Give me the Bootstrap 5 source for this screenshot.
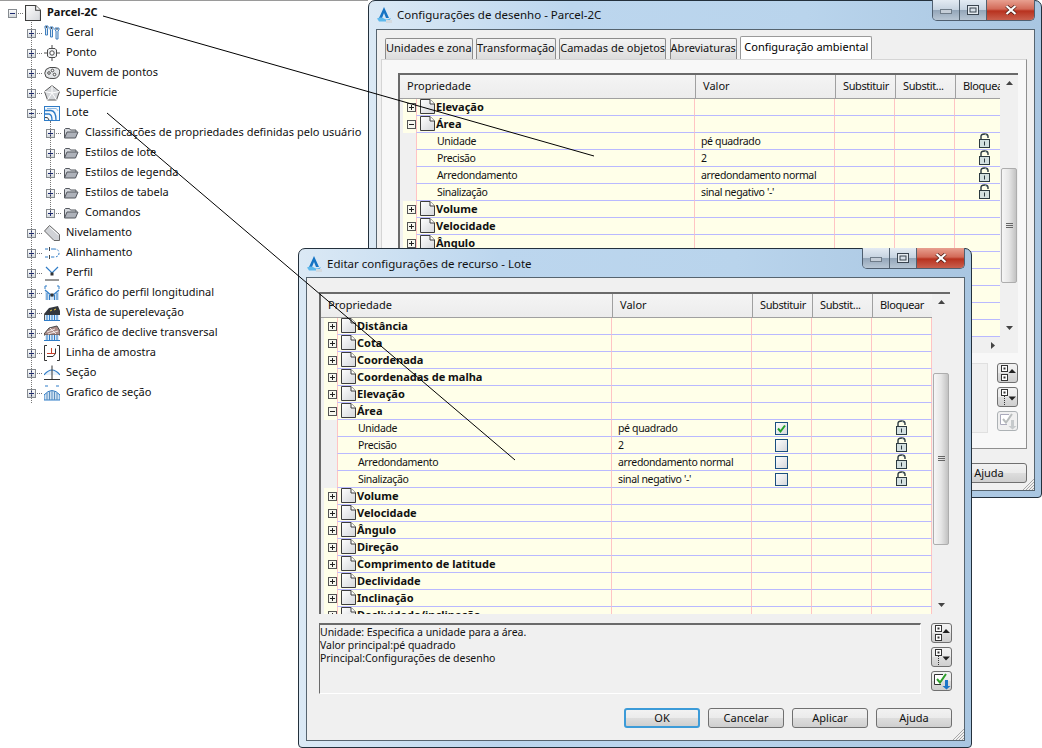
<!DOCTYPE html>
<html lang="pt">
<head>
<meta charset="utf-8">
<title>Configurações</title>
<link href="https://cdn.jsdelivr.net/npm/bootstrap@5.3.0/dist/css/bootstrap.min.css" rel="stylesheet">
<style>
html,body{margin:0;background:#fff}
body{font:11px/14px "Noto Sans",sans-serif;color:#111}
.deskarea{position:relative;width:1042px;height:748px;overflow:hidden;background:#fff}
.treepane{position:relative;border-top:1px solid #9a9a9a;padding-top:2px;width:368px}
.vdots{position:absolute;border-left:1px dotted #777;width:0}
.vd-a{left:31px;top:21px;height:381px}
.vd-b{left:50px;top:120px;height:92px}
.trow{height:20px;display:flex;align-items:center;white-space:nowrap}
.lv0{padding-left:8px}.lv1{padding-left:27px}.lv2{padding-left:46px}
.stub{width:5px;height:0;border-top:1px dotted #777;margin:0 2px 0 1px;flex:none}
.xb{width:9px;height:9px;flex:none;display:block}
.ico{width:16px;height:16px;flex:none;display:block}
.tlabel{margin-left:6px;margin-bottom:2px}
.lv0 .tlabel{font-weight:700}
.winbox{position:absolute;width:674px;display:flex;flex-direction:column;border:1px solid #23303c;border-radius:7px 7px 4px 4px;
 background:linear-gradient(90deg,#dbe9f5,#bcd6ee 30%,#b9d4ec 65%,#a9c6e1);padding:0 6px 6px 7px}
.win-back{left:368px;top:0;height:498px}
.win-front{left:298px;top:248px;height:500px}
.ttlbar{height:28px;display:flex;align-items:center;flex:none;font-size:11.5px;position:relative}
.win-front .ttlbar{padding-top:1px}
.ttlbar .apico{width:16px;height:16px;margin-right:5px;flex:none}
.winbtns{position:absolute;right:0;top:-1px;height:21px;display:flex;border:1px solid #4f5f70;border-top:0;border-radius:0 0 5px 5px;overflow:hidden}
.wb{display:flex;align-items:center;justify-content:center;width:27px;background:linear-gradient(#e3ebf3,#c6d3e0 48%,#94a6b9 52%,#b8c6d4);border-right:1px solid #52616f}
.wb-x{width:47px;border-right:0;background:linear-gradient(#e8a090,#d26a58 45%,#b8321f 55%,#c9604e)}
.clientbox{flex:1;min-height:0;background:#f0f0f0;border:1px solid #56646f;position:relative;display:flex;flex-direction:column}
.grip{position:absolute;right:0;bottom:0;width:12px;height:12px}
.f-body{padding:14px 12px 12px 12px;height:100%;display:flex;flex-direction:column}
.pgrid{display:flex;border-top:2px solid #6a6a6a;border-left:2px solid #6a6a6a;overflow:hidden;flex:none;background:#f0f0f0}
.pg-main{flex:1;min-width:0;overflow:hidden}
.pg-head{display:flex;height:24px;background:linear-gradient(#f4f4f4,#ececec);border-bottom:1px solid #a0a0a0}
.hc{border-right:1px solid #a0a0a0;padding-left:7px;line-height:22px;white-space:nowrap;overflow:hidden;flex:none}
.c1{width:292px}.c2{width:140px}.c3{width:60px;letter-spacing:-.4px}
.pg-row{display:flex;height:17px;white-space:nowrap}
.gut{width:3px;flex:none;background:#f0f0f0}
.ex{width:13px;flex:none;background:#ffffe9;display:flex;align-items:center;padding-left:4px;border-bottom:1px solid #ffffe9}
.ex-empty{background:#f0f0f0;border-bottom:0}
.cell{background:#ffffe9;border-right:1px solid #ffc4c4;border-bottom:1px solid #b9b9ff;flex:none;line-height:17px;overflow:visible;position:relative;font-size:10.5px;letter-spacing:-.35px}
.cl{width:275px;border-left:1px solid #ffc4c4}
.cv{width:140px;padding-left:6px}
.cs{width:60px;display:flex;align-items:center;justify-content:center}
.docic{position:absolute;left:3px;top:0;width:15px;height:15px;display:block}
.gname{font-weight:700;padding-left:19px;display:block;font-size:11px;letter-spacing:0;line-height:15px}
.cname{padding-left:20px;display:block}
.ckb{width:13px;height:13px;display:block}
.lck{width:13px;height:15px;display:block;margin-bottom:2px}
.vsb{width:18px;flex:none;background:#f0f0f0;display:flex;flex-direction:column;align-items:center}
.sbb{height:16px;flex:none;width:100%;display:flex;align-items:center;justify-content:center}
.sbb-end{height:18px}
.thumb{width:16px;flex:none;border:1px solid #adadad;border-radius:2px;background:linear-gradient(90deg,#f6f6f6,#e6e6e6 50%,#c2c2c2);display:flex;align-items:center;justify-content:center}
.sbgap{flex:1}
.fr-grid{width:631px;height:322px}
.fr-gap{height:63px;flex:none}
.fr-thumb{height:172px}
.descline{display:flex;margin-top:9px;gap:10px;flex:none}
.descbox{border:1px solid #fff;border-top:2px solid #6a6a6a;border-left:1px solid #6a6a6a;height:71px;width:602px;line-height:13px;font-size:10.5px;letter-spacing:-.05px;padding-top:1px;flex:none}
.sidebtns{display:flex;flex-direction:column;gap:4px;width:21px}
.sb-tool{width:21px;height:20px;border:1px solid #707070;border-radius:3px;background:linear-gradient(#f2f2f2,#ebebeb 48%,#ddd 52%,#cfcfcf);padding:0;display:block}
.sb-tool svg{display:block;width:19px;height:18px}
.sb-off{border-color:#adb2b5;background:#f0f0f0}
.actbar{margin-top:14px;display:flex;justify-content:flex-end;gap:8px;flex:none}
.actbtn{width:76px;height:20px;padding:0;font-size:11px;line-height:16px;color:#111;border:1px solid #707070;border-radius:3px;background:linear-gradient(#f2f2f2,#ebebeb 48%,#ddd 52%,#cfcfcf)}
.actbtn-main{border:2px solid #3c9bd8}
.tabstrip{margin:7px 0 0 4px;padding:0 0 0 4px;height:22px;border:0;gap:3.5px;flex-wrap:nowrap;flex:none;position:relative;z-index:1;align-items:flex-end}
.tabstrip .nav-link{height:21px;padding:0;font-size:11px;line-height:18px;color:#111;border:1px solid #8c8c8c;border-bottom:0;border-radius:2px 2px 0 0;background:linear-gradient(#f4f4f4,#dcdcdc);margin:0;white-space:nowrap}
.tabstrip .nav-link.active{height:23px;background:#fff;border-color:#9a9a9a;padding:0 3px;line-height:19px}
.tabpane{margin-left:4px;margin-right:7px;height:390px;flex:none;background:#f8f8f8;border:1px solid #8f8f8f;border-left-color:#d5d5d5;border-top-color:#d5d5d5;padding:13px 7px 0 16px}
.bk-grid{width:620px;height:264px}
.bk-grid .c1{width:296px}
.bk-grid .cl{width:279px}
.bk-gap{height:77px;flex:none}
.bk-thumb{height:115px}
.bk-hs{display:flex;width:620px;height:16px;background:#f0f0f0;justify-content:flex-end;align-items:center;padding-right:23px;border-left:2px solid #6a6a6a}
.bk-foot{display:flex;justify-content:flex-end;margin:14px 7px 0 0}
.bk-desc{display:flex;gap:9px;margin-top:10px}
.bk-descbox{width:590px;height:70px;background:#f0f0f0;border:1px solid #e0e0e0}
.leader{position:absolute;left:0;top:0;width:1042px;height:748px;pointer-events:none}
</style>
</head>
<body>
<svg width="0" height="0" class="position-absolute">
<defs>
<linearGradient id="gb" x1="0" y1="0" x2="0" y2="1"><stop offset="0" stop-color="#fff"/><stop offset="1" stop-color="#cfd4d8"/></linearGradient>
<linearGradient id="gd" x1="0" y1="0" x2="1" y2="1"><stop offset="0" stop-color="#fff"/><stop offset="1" stop-color="#d4d6da"/></linearGradient>
<symbol id="tp" viewBox="0 0 9 9"><rect x=".5" y=".5" width="8" height="8" fill="url(#gb)" stroke="#868b90"/><path d="M2 4.500h5M4.500 2v5" stroke="#1c2a70"/></symbol>
<symbol id="tm" viewBox="0 0 9 9"><rect x=".5" y=".5" width="8" height="8" fill="url(#gb)" stroke="#868b90"/><path d="M2 4.500h5" stroke="#1c2a70"/></symbol>
<symbol id="gp" viewBox="0 0 9 9"><rect x=".5" y=".5" width="8" height="8" fill="#f7f7ef" stroke="#555"/><path d="M2 4.500h5M4.500 2v5" stroke="#222"/></symbol>
<symbol id="gm" viewBox="0 0 9 9"><rect x=".5" y=".5" width="8" height="8" fill="#f7f7ef" stroke="#555"/><path d="M2 4.500h5" stroke="#222"/></symbol>
<symbol id="doc" viewBox="0 0 15 15"><path d="M.5 .5H10L14.500 5V14.500H.5Z" fill="url(#gd)" stroke="#3d3d3d"/><path d="M10 .5V5H14.500" fill="#fff" stroke="#3d3d3d"/></symbol>
<symbol id="folder" viewBox="0 0 16 16"><path d="M1.500 13V4.500l1-1h4l1 1.500h5.500v2" fill="#d4d7dc" stroke="#55585f"/><path d="M1.500 13L4 7h11l-2.500 6Z" fill="#aeb2ba" stroke="#55585f"/></symbol>
<symbol id="i-geral" viewBox="0 0 16 16"><g fill="#dfe9f2" stroke="#3f7fbf"><path d="M1 1h3v2l-.5 1v6H1.500V4L1 3Z"/><path d="M6 2h3v2l-.5 1v7h-2V5L6 4Z"/><path d="M11 3h4v2l-1 1v8h-2V6l-1-1Z"/></g><path d="M2.500 1v2M7.500 2v2M13 3v2" stroke="#44494f"/></symbol>
<symbol id="i-ponto" viewBox="0 0 16 16"><path d="M8 0v4M8 12v4M0 8h4M12 8h4" stroke="#4a4a4a"/><path d="M5 3.500h6L12.500 5v6L11 12.500H5L3.500 11V5Z" fill="#eef0f2" stroke="#4a4a4a"/><circle cx="8" cy="8" r="2.200" fill="#fff" stroke="#4a4a4a"/></symbol>
<symbol id="i-nuvem" viewBox="0 0 16 16"><path d="M2 4.500Q5 1.500 11 2.500T15.500 8Q15 13 10 13.500T2 12Q-.5 8 2 4.500Z" fill="#e4e6e8" stroke="#4a4a4a"/><circle cx="5" cy="8" r="1.300" fill="#fff" stroke="#4a4a4a"/><circle cx="8.500" cy="5.500" r="1.300" fill="#fff" stroke="#4a4a4a"/><circle cx="10.500" cy="9.500" r="1.300" fill="#fff" stroke="#4a4a4a"/></symbol>
<symbol id="i-sup" viewBox="0 0 16 16"><path d="M8 .5L15.500 6.500 12.500 15H3.500L.5 6.500Z" fill="#d5d7da" stroke="#5a5a5a"/><path d="M8 .5V8L.5 6.500M8 8l7.500-1.500M8 8l-4.500 7M8 8l4.500 7" fill="none" stroke="#fff"/></symbol>
<symbol id="i-lote" viewBox="0 0 16 16"><rect x=".5" y="1.500" width="15" height="14" fill="#f5f9fd" stroke="#2f7cc7"/><path d="M.5 5.500H7Q12 6 12 15M.5 9H5Q8 9.500 8 15" fill="none" stroke="#2f7cc7" stroke-width="1.300"/><path d="M1 12.500Q4 11.500 5 15" fill="none" stroke="#3f3f3f"/><path d="M3 3.500h9Q13.500 4 14 6" fill="none" stroke="#8fb8e0"/></symbol>
<symbol id="i-niv" viewBox="0 0 16 16"><path d="M.5 6L5.500 .5 15.500 9.500V15.500H10Z" fill="#d0d2d6" stroke="#666"/><path d="M5.500 2L14.500 10" stroke="#fff"/></symbol>
<symbol id="i-ali" viewBox="0 0 16 16"><g fill="none" stroke="#2f7cc7"><path d="M1 4h3M7 4h3M1 12h3M7 12h3"/><path d="M10 4q5 0 5 4t-5 4" stroke-dasharray="2 1.500"/></g><path d="M5.500 2v4M5.500 10v4" stroke="#444"/></symbol>
<symbol id="i-perf" viewBox="0 0 16 16"><path d="M2 2l6 6 6-6" fill="none" stroke="#2f7cc7" stroke-width="1.200"/><rect x="6.500" y="7.500" width="3" height="3" fill="#333"/><path d="M1 15h14" stroke="#333"/></symbol>
<symbol id="i-gperf" viewBox="0 0 16 16"><path d="M1 1h2M13 1h2M1 1v3M15 1v3" stroke="#2f7cc7"/><path d="M1 5l7 6 7-6V15H1Z" fill="#cfe1f2"/><path d="M1 5l7 6 7-6" fill="none" stroke="#2f7cc7" stroke-width="1.200"/><path d="M3 8v7M5.500 10v5M10.500 10v5M13 8v7" stroke="#2f7cc7"/><rect x="6.500" y="8.500" width="3" height="3" fill="#333"/></symbol>
<symbol id="i-vsup" viewBox="0 0 16 16"><path d="M0 9L5 3 14 1 16 6V10H0Z" fill="#33373d"/><path d="M6 6l2-1M10 5l2-1" stroke="#e8c640"/><path d="M1 10h14v5H1Z" fill="#dbe9f6"/><path d="M3 10v5M5.500 10v5M8 10v5M10.500 10v5M13 10v5" stroke="#2f7cc7"/><path d="M0 15.500h16" stroke="#2f7cc7"/><path d="M.5 9v6" stroke="#555"/></symbol>
<symbol id="i-gdec" viewBox="0 0 16 16"><path d="M0 9L5 3 13 1 16 6V10H0Z" fill="#a98a86" stroke="#4a4a4a"/><path d="M3 7l8-3M4 9l10-3M6 3l6 6" stroke="#f0e6e4"/><path d="M1 10h14v5H1Z" fill="#dbe9f6"/><path d="M3 10v5M5.500 10v5M8 10v5M10.500 10v5M13 10v5" stroke="#2f7cc7"/><path d="M0 15.500h16" stroke="#2f7cc7"/></symbol>
<symbol id="i-linha" viewBox="0 0 16 16"><path d="M3 .5H.5v15H3M13 .5h2.500v15H13" fill="none" stroke="#333"/><path d="M3 8.500h8.500M7.500 3v5.500" fill="none" stroke="#c8402a"/><path d="M11.500 3.500V8.500L9 11.500H3" fill="none" stroke="#333"/></symbol>
<symbol id="i-sec" viewBox="0 0 16 16"><path d="M0 10Q8 0 16 10" fill="#e8f1f9" stroke="#2f7cc7" stroke-width="1.200"/><path d="M8 .5V14.500" stroke="#333"/><path d="M0 14.500h16" stroke="#333"/></symbol>
<symbol id="i-gsec" viewBox="0 0 16 16"><path d="M1 1h3M12 1h3" stroke="#2f7cc7"/><path d="M0 10Q8 1 16 10V15H0Z" fill="#cfe1f2" stroke="#2f7cc7"/><path d="M3 8v7M5.500 6v9M8 5v10M10.500 6v9M13 8v7" stroke="#5c8fbf"/></symbol>
<symbol id="apx" viewBox="0 0 16 16"><path d="M8 0L13 11H10L8 6 6 11H3Z" fill="#1574c4"/><path d="M1 11.500Q5 9.500 8 11.500T15 11L13 14.500H3Z" fill="#5cb8ec"/><rect x="10" y="13" width="6" height="3" fill="#d4dadf"/></symbol>
<symbol id="lockic" viewBox="0 0 13 15"><path d="M3 7V3.500Q3 1 6.500 1T10 3.500V5" fill="none" stroke="#2c3a40" stroke-width="1.400"/><path d="M7 1.500Q8.500 1.500 9 3" fill="none" stroke="#9aa"/><rect x="1.500" y="6.500" width="10" height="8" fill="#d3e0e0" stroke="#2c3a40"/><path d="M6.500 8.500v4" stroke="#2c3a40"/></symbol>
<symbol id="ckoff" viewBox="0 0 13 13"><rect x=".5" y=".5" width="12" height="12" fill="url(#gd)" stroke="#1b4f80"/></symbol>
<symbol id="ckon" viewBox="0 0 13 13"><rect x=".5" y=".5" width="12" height="12" fill="url(#gd)" stroke="#1b4f80"/><path d="M3 6.500L5.500 9.500 10 3.500" fill="none" stroke="#21a02a" stroke-width="2"/></symbol>
<symbol id="arU" viewBox="0 0 7 4"><path d="M3.500 0L7 4H0Z" fill="#444"/></symbol>
<symbol id="arD" viewBox="0 0 7 4"><path d="M3.500 4L7 0H0Z" fill="#444"/></symbol>
<symbol id="arR" viewBox="0 0 4 7"><path d="M4 3.500L0 7V0Z" fill="#444"/></symbol>
<symbol id="grips" viewBox="0 0 7 6"><path d="M0 .5h7M0 2.500h7M0 4.500h7" stroke="#666"/></symbol>
<symbol id="t-exp" viewBox="0 0 19 18"><rect x="3.500" y="1.500" width="6" height="6" fill="#fff" stroke="#333"/><rect x="5.500" y="3.500" width="2" height="2" fill="#333"/><rect x="3.500" y="10.500" width="6" height="6" fill="#fff" stroke="#333"/><rect x="5.500" y="12.500" width="2" height="2" fill="#333"/><path d="M14 5L18 9H10.500Z" fill="#222"/></symbol>
<symbol id="t-col" viewBox="0 0 19 18"><rect x="3.500" y="1.500" width="6" height="6" fill="#fff" stroke="#333"/><rect x="5.500" y="3.500" width="2" height="2" fill="#333"/><path d="M6.500 8v10" stroke="#333" stroke-dasharray="1 1"/><path d="M14 12.500L18 8.500H10.500Z" fill="#222"/></symbol>
<symbol id="t-chk" viewBox="0 0 19 18"><path d="M11 2.500H2.500V12.500H9" fill="#fff" stroke="#333"/><path d="M5 7l3 3.500L14 2" fill="none" stroke="#2e9e2a" stroke-width="2"/><path d="M13 8v6h-2.500l4 3.500 4-3.500H16V8Z" fill="#1d76c8"/></symbol>
<symbol id="t-chk-off" viewBox="0 0 19 18"><path d="M11 2.500H2.500V12.500H9" fill="#fff" stroke="#aab"/><path d="M5 7l3 3.500L14 2" fill="none" stroke="#b8bcbc" stroke-width="2"/><path d="M13 8v6h-2.500l4 3.500 4-3.500H16V8Z" fill="#c6cacc"/></symbol>
<symbol id="gripic" viewBox="0 0 12 12"><path d="M12 1L1 12M12 4L4 12M12 7L7 12M12 10L10 12" stroke="#a8a8a8"/></symbol>
<symbol id="w-min" viewBox="0 0 12 8"><rect x=".5" y="3.500" width="11" height="4" fill="#c5ced8" stroke="#6f7c89"/></symbol>
<symbol id="w-max" viewBox="0 0 12 10"><rect x=".5" y=".5" width="11" height="9" fill="#e4eaf0" stroke="#39444f"/><rect x="3" y="3" width="6" height="4" fill="#d7dfe8" stroke="#39444f"/></symbol>
<symbol id="w-x" viewBox="0 0 12 10"><path d="M1.500 1L10.500 9M10.500 1L1.500 9" stroke="#4c1c14" stroke-width="3.600"/><path d="M1.500 1L10.500 9M10.500 1L1.500 9" stroke="#fff" stroke-width="2.200"/></symbol>
</defs>
</svg>

<div class="deskarea">
 <div class="treepane">
  <span class="vdots vd-a"></span><span class="vdots vd-b"></span>
  <div class="trow lv0"><svg class="xb"><use href="#tm"/></svg><span class="stub"></span><svg class="ico"><use href="#doc"/></svg><span class="tlabel">Parcel-2C</span></div>
  <div class="trow lv1"><svg class="xb"><use href="#tp"/></svg><span class="stub"></span><svg class="ico"><use href="#i-geral"/></svg><span class="tlabel">Geral</span></div>
  <div class="trow lv1"><svg class="xb"><use href="#tp"/></svg><span class="stub"></span><svg class="ico"><use href="#i-ponto"/></svg><span class="tlabel">Ponto</span></div>
  <div class="trow lv1"><svg class="xb"><use href="#tp"/></svg><span class="stub"></span><svg class="ico"><use href="#i-nuvem"/></svg><span class="tlabel">Nuvem de pontos</span></div>
  <div class="trow lv1"><svg class="xb"><use href="#tp"/></svg><span class="stub"></span><svg class="ico"><use href="#i-sup"/></svg><span class="tlabel">Superfície</span></div>
  <div class="trow lv1"><svg class="xb"><use href="#tm"/></svg><span class="stub"></span><svg class="ico"><use href="#i-lote"/></svg><span class="tlabel">Lote</span></div>
  <div class="trow lv2"><svg class="xb"><use href="#tp"/></svg><span class="stub"></span><svg class="ico"><use href="#folder"/></svg><span class="tlabel">Classificações de propriedades definidas pelo usuário</span></div>
  <div class="trow lv2"><svg class="xb"><use href="#tp"/></svg><span class="stub"></span><svg class="ico"><use href="#folder"/></svg><span class="tlabel">Estilos de lote</span></div>
  <div class="trow lv2"><svg class="xb"><use href="#tp"/></svg><span class="stub"></span><svg class="ico"><use href="#folder"/></svg><span class="tlabel">Estilos de legenda</span></div>
  <div class="trow lv2"><svg class="xb"><use href="#tp"/></svg><span class="stub"></span><svg class="ico"><use href="#folder"/></svg><span class="tlabel">Estilos de tabela</span></div>
  <div class="trow lv2"><svg class="xb"><use href="#tp"/></svg><span class="stub"></span><svg class="ico"><use href="#folder"/></svg><span class="tlabel">Comandos</span></div>
  <div class="trow lv1"><svg class="xb"><use href="#tp"/></svg><span class="stub"></span><svg class="ico"><use href="#i-niv"/></svg><span class="tlabel">Nivelamento</span></div>
  <div class="trow lv1"><svg class="xb"><use href="#tp"/></svg><span class="stub"></span><svg class="ico"><use href="#i-ali"/></svg><span class="tlabel">Alinhamento</span></div>
  <div class="trow lv1"><svg class="xb"><use href="#tp"/></svg><span class="stub"></span><svg class="ico"><use href="#i-perf"/></svg><span class="tlabel">Perfil</span></div>
  <div class="trow lv1"><svg class="xb"><use href="#tp"/></svg><span class="stub"></span><svg class="ico"><use href="#i-gperf"/></svg><span class="tlabel">Gráfico do perfil longitudinal</span></div>
  <div class="trow lv1"><svg class="xb"><use href="#tp"/></svg><span class="stub"></span><svg class="ico"><use href="#i-vsup"/></svg><span class="tlabel">Vista de superelevação</span></div>
  <div class="trow lv1"><svg class="xb"><use href="#tp"/></svg><span class="stub"></span><svg class="ico"><use href="#i-gdec"/></svg><span class="tlabel">Gráfico de declive transversal</span></div>
  <div class="trow lv1"><svg class="xb"><use href="#tp"/></svg><span class="stub"></span><svg class="ico"><use href="#i-linha"/></svg><span class="tlabel">Linha de amostra</span></div>
  <div class="trow lv1"><svg class="xb"><use href="#tp"/></svg><span class="stub"></span><svg class="ico"><use href="#i-sec"/></svg><span class="tlabel">Seção</span></div>
  <div class="trow lv1"><svg class="xb"><use href="#tp"/></svg><span class="stub"></span><svg class="ico"><use href="#i-gsec"/></svg><span class="tlabel">Grafico de seção</span></div>
 </div>

 <div class="winbox win-back">
  <div class="ttlbar"><svg class="apico"><use href="#apx"/></svg><span>Configurações de desenho - Parcel-2C</span>
   <div class="winbtns"><span class="wb"><svg width="12" height="8"><use href="#w-min"/></svg></span><span class="wb"><svg width="12" height="10"><use href="#w-max"/></svg></span><span class="wb wb-x"><svg width="12" height="10"><use href="#w-x"/></svg></span></div>
  </div>
  <div class="clientbox">
   <ul class="nav nav-tabs tabstrip">
    <li class="nav-item"><a class="nav-link" href="#">Unidades e zona</a></li>
    <li class="nav-item"><a class="nav-link" href="#">Transformação</a></li>
    <li class="nav-item"><a class="nav-link" href="#">Camadas de objetos</a></li>
    <li class="nav-item"><a class="nav-link" href="#">Abreviaturas</a></li>
    <li class="nav-item"><a class="nav-link active" href="#">Configuração ambiental</a></li>
   </ul>
   <div class="tabpane">
    <div class="pgrid bk-grid">
     <div class="pg-main">
      <div class="pg-head"><span class="hc c1">Propriedade</span><span class="hc c2">Valor</span><span class="hc c3">Substituir</span><span class="hc c3">Substit...</span><span class="hc c3">Bloquear</span></div>
      <div class="pg-row"><span class="gut"></span><span class="ex"><svg class="xb"><use href="#gp"/></svg></span><span class="cell cl"><svg class="docic"><use href="#doc"/></svg><b class="gname">Elevação</b></span><span class="cell cv"></span><span class="cell cs"></span><span class="cell cs"></span><span class="cell cs"></span></div>
      <div class="pg-row"><span class="gut"></span><span class="ex"><svg class="xb"><use href="#gm"/></svg></span><span class="cell cl"><svg class="docic"><use href="#doc"/></svg><b class="gname">Área</b></span><span class="cell cv"></span><span class="cell cs"></span><span class="cell cs"></span><span class="cell cs"></span></div>
      <div class="pg-row"><span class="gut"></span><span class="ex ex-empty"></span><span class="cell cl"><span class="cname">Unidade</span></span><span class="cell cv">pé quadrado</span><span class="cell cs"></span><span class="cell cs"></span><span class="cell cs"><svg class="lck"><use href="#lockic"/></svg></span></div>
      <div class="pg-row"><span class="gut"></span><span class="ex ex-empty"></span><span class="cell cl"><span class="cname">Precisão</span></span><span class="cell cv">2</span><span class="cell cs"></span><span class="cell cs"></span><span class="cell cs"><svg class="lck"><use href="#lockic"/></svg></span></div>
      <div class="pg-row"><span class="gut"></span><span class="ex ex-empty"></span><span class="cell cl"><span class="cname">Arredondamento</span></span><span class="cell cv">arredondamento normal</span><span class="cell cs"></span><span class="cell cs"></span><span class="cell cs"><svg class="lck"><use href="#lockic"/></svg></span></div>
      <div class="pg-row"><span class="gut"></span><span class="ex ex-empty"></span><span class="cell cl"><span class="cname">Sinalização</span></span><span class="cell cv">sinal negativo '-'</span><span class="cell cs"></span><span class="cell cs"></span><span class="cell cs"><svg class="lck"><use href="#lockic"/></svg></span></div>
      <div class="pg-row"><span class="gut"></span><span class="ex"><svg class="xb"><use href="#gp"/></svg></span><span class="cell cl"><svg class="docic"><use href="#doc"/></svg><b class="gname">Volume</b></span><span class="cell cv"></span><span class="cell cs"></span><span class="cell cs"></span><span class="cell cs"></span></div>
      <div class="pg-row"><span class="gut"></span><span class="ex"><svg class="xb"><use href="#gp"/></svg></span><span class="cell cl"><svg class="docic"><use href="#doc"/></svg><b class="gname">Velocidade</b></span><span class="cell cv"></span><span class="cell cs"></span><span class="cell cs"></span><span class="cell cs"></span></div>
      <div class="pg-row"><span class="gut"></span><span class="ex"><svg class="xb"><use href="#gp"/></svg></span><span class="cell cl"><svg class="docic"><use href="#doc"/></svg><b class="gname">Ângulo</b></span><span class="cell cv"></span><span class="cell cs"></span><span class="cell cs"></span><span class="cell cs"></span></div>
      <div class="pg-row"><span class="gut"></span><span class="ex"></span><span class="cell cl"></span><span class="cell cv"></span><span class="cell cs"></span><span class="cell cs"></span><span class="cell cs"></span></div>
      <div class="pg-row"><span class="gut"></span><span class="ex"></span><span class="cell cl"></span><span class="cell cv"></span><span class="cell cs"></span><span class="cell cs"></span><span class="cell cs"></span></div>
      <div class="pg-row"><span class="gut"></span><span class="ex"></span><span class="cell cl"></span><span class="cell cv"></span><span class="cell cs"></span><span class="cell cs"></span><span class="cell cs"></span></div>
      <div class="pg-row"><span class="gut"></span><span class="ex"></span><span class="cell cl"></span><span class="cell cv"></span><span class="cell cs"></span><span class="cell cs"></span><span class="cell cs"></span></div>
      <div class="pg-row"><span class="gut"></span><span class="ex"></span><span class="cell cl"></span><span class="cell cv"></span><span class="cell cs"></span><span class="cell cs"></span><span class="cell cs"></span></div>
     </div>
     <div class="vsb"><span class="sbb"><svg width="7" height="4"><use href="#arU"/></svg></span><span class="bk-gap"></span><span class="thumb bk-thumb"><svg width="7" height="6"><use href="#grips"/></svg></span><span class="sbgap"></span><span class="sbb sbb-end"><svg width="7" height="4"><use href="#arD"/></svg></span></div>
    </div>
    <div class="bk-hs"><svg width="4" height="7"><use href="#arR"/></svg></div>
    <div class="bk-desc"><div class="bk-descbox"></div><div class="sidebtns"><button class="sb-tool" type="button"><svg><use href="#t-exp"/></svg></button><button class="sb-tool" type="button"><svg><use href="#t-col"/></svg></button><button class="sb-tool sb-off" type="button"><svg><use href="#t-chk-off"/></svg></button></div></div>
   </div>
   <div class="bk-foot"><button class="btn actbtn" type="button">Ajuda</button></div>
   <svg class="grip"><use href="#gripic"/></svg>
  </div>
 </div>

 <div class="winbox win-front">
  <div class="ttlbar"><svg class="apico"><use href="#apx"/></svg><span>Editar configurações de recurso - Lote</span>
   <div class="winbtns"><span class="wb"><svg width="12" height="8"><use href="#w-min"/></svg></span><span class="wb"><svg width="12" height="10"><use href="#w-max"/></svg></span><span class="wb wb-x"><svg width="12" height="10"><use href="#w-x"/></svg></span></div>
  </div>
  <div class="clientbox">
   <div class="f-body">
    <div class="pgrid fr-grid">
     <div class="pg-main">
      <div class="pg-head"><span class="hc c1">Propriedade</span><span class="hc c2">Valor</span><span class="hc c3">Substituir</span><span class="hc c3">Substit...</span><span class="hc c3">Bloquear</span></div>
      <div class="pg-row"><span class="gut"></span><span class="ex"><svg class="xb"><use href="#gp"/></svg></span><span class="cell cl"><svg class="docic"><use href="#doc"/></svg><b class="gname">Distância</b></span><span class="cell cv"></span><span class="cell cs"></span><span class="cell cs"></span><span class="cell cs"></span></div>
      <div class="pg-row"><span class="gut"></span><span class="ex"><svg class="xb"><use href="#gp"/></svg></span><span class="cell cl"><svg class="docic"><use href="#doc"/></svg><b class="gname">Cota</b></span><span class="cell cv"></span><span class="cell cs"></span><span class="cell cs"></span><span class="cell cs"></span></div>
      <div class="pg-row"><span class="gut"></span><span class="ex"><svg class="xb"><use href="#gp"/></svg></span><span class="cell cl"><svg class="docic"><use href="#doc"/></svg><b class="gname">Coordenada</b></span><span class="cell cv"></span><span class="cell cs"></span><span class="cell cs"></span><span class="cell cs"></span></div>
      <div class="pg-row"><span class="gut"></span><span class="ex"><svg class="xb"><use href="#gp"/></svg></span><span class="cell cl"><svg class="docic"><use href="#doc"/></svg><b class="gname">Coordenadas de malha</b></span><span class="cell cv"></span><span class="cell cs"></span><span class="cell cs"></span><span class="cell cs"></span></div>
      <div class="pg-row"><span class="gut"></span><span class="ex"><svg class="xb"><use href="#gp"/></svg></span><span class="cell cl"><svg class="docic"><use href="#doc"/></svg><b class="gname">Elevação</b></span><span class="cell cv"></span><span class="cell cs"></span><span class="cell cs"></span><span class="cell cs"></span></div>
      <div class="pg-row"><span class="gut"></span><span class="ex"><svg class="xb"><use href="#gm"/></svg></span><span class="cell cl"><svg class="docic"><use href="#doc"/></svg><b class="gname">Área</b></span><span class="cell cv"></span><span class="cell cs"></span><span class="cell cs"></span><span class="cell cs"></span></div>
      <div class="pg-row"><span class="gut"></span><span class="ex ex-empty"></span><span class="cell cl"><span class="cname">Unidade</span></span><span class="cell cv">pé quadrado</span><span class="cell cs"><svg class="ckb"><use href="#ckon"/></svg></span><span class="cell cs"></span><span class="cell cs"><svg class="lck"><use href="#lockic"/></svg></span></div>
      <div class="pg-row"><span class="gut"></span><span class="ex ex-empty"></span><span class="cell cl"><span class="cname">Precisão</span></span><span class="cell cv">2</span><span class="cell cs"><svg class="ckb"><use href="#ckoff"/></svg></span><span class="cell cs"></span><span class="cell cs"><svg class="lck"><use href="#lockic"/></svg></span></div>
      <div class="pg-row"><span class="gut"></span><span class="ex ex-empty"></span><span class="cell cl"><span class="cname">Arredondamento</span></span><span class="cell cv">arredondamento normal</span><span class="cell cs"><svg class="ckb"><use href="#ckoff"/></svg></span><span class="cell cs"></span><span class="cell cs"><svg class="lck"><use href="#lockic"/></svg></span></div>
      <div class="pg-row"><span class="gut"></span><span class="ex ex-empty"></span><span class="cell cl"><span class="cname">Sinalização</span></span><span class="cell cv">sinal negativo '-'</span><span class="cell cs"><svg class="ckb"><use href="#ckoff"/></svg></span><span class="cell cs"></span><span class="cell cs"><svg class="lck"><use href="#lockic"/></svg></span></div>
      <div class="pg-row"><span class="gut"></span><span class="ex"><svg class="xb"><use href="#gp"/></svg></span><span class="cell cl"><svg class="docic"><use href="#doc"/></svg><b class="gname">Volume</b></span><span class="cell cv"></span><span class="cell cs"></span><span class="cell cs"></span><span class="cell cs"></span></div>
      <div class="pg-row"><span class="gut"></span><span class="ex"><svg class="xb"><use href="#gp"/></svg></span><span class="cell cl"><svg class="docic"><use href="#doc"/></svg><b class="gname">Velocidade</b></span><span class="cell cv"></span><span class="cell cs"></span><span class="cell cs"></span><span class="cell cs"></span></div>
      <div class="pg-row"><span class="gut"></span><span class="ex"><svg class="xb"><use href="#gp"/></svg></span><span class="cell cl"><svg class="docic"><use href="#doc"/></svg><b class="gname">Ângulo</b></span><span class="cell cv"></span><span class="cell cs"></span><span class="cell cs"></span><span class="cell cs"></span></div>
      <div class="pg-row"><span class="gut"></span><span class="ex"><svg class="xb"><use href="#gp"/></svg></span><span class="cell cl"><svg class="docic"><use href="#doc"/></svg><b class="gname">Direção</b></span><span class="cell cv"></span><span class="cell cs"></span><span class="cell cs"></span><span class="cell cs"></span></div>
      <div class="pg-row"><span class="gut"></span><span class="ex"><svg class="xb"><use href="#gp"/></svg></span><span class="cell cl"><svg class="docic"><use href="#doc"/></svg><b class="gname">Comprimento de latitude</b></span><span class="cell cv"></span><span class="cell cs"></span><span class="cell cs"></span><span class="cell cs"></span></div>
      <div class="pg-row"><span class="gut"></span><span class="ex"><svg class="xb"><use href="#gp"/></svg></span><span class="cell cl"><svg class="docic"><use href="#doc"/></svg><b class="gname">Declividade</b></span><span class="cell cv"></span><span class="cell cs"></span><span class="cell cs"></span><span class="cell cs"></span></div>
      <div class="pg-row"><span class="gut"></span><span class="ex"><svg class="xb"><use href="#gp"/></svg></span><span class="cell cl"><svg class="docic"><use href="#doc"/></svg><b class="gname">Inclinação</b></span><span class="cell cv"></span><span class="cell cs"></span><span class="cell cs"></span><span class="cell cs"></span></div>
      <div class="pg-row"><span class="gut"></span><span class="ex"><svg class="xb"><use href="#gp"/></svg></span><span class="cell cl"><svg class="docic"><use href="#doc"/></svg><b class="gname">Declividade/inclinação</b></span><span class="cell cv"></span><span class="cell cs"></span><span class="cell cs"></span><span class="cell cs"></span></div>
     </div>
     <div class="vsb"><span class="sbb"><svg width="7" height="4"><use href="#arU"/></svg></span><span class="fr-gap"></span><span class="thumb fr-thumb"><svg width="7" height="6"><use href="#grips"/></svg></span><span class="sbgap"></span><span class="sbb sbb-end"><svg width="7" height="4"><use href="#arD"/></svg></span></div>
    </div>
    <div class="descline">
     <div class="descbox">Unidade: Especifica a unidade para a área.<br>Valor principal:pé quadrado<br>Principal:Configurações de desenho</div>
     <div class="sidebtns"><button class="sb-tool" type="button"><svg><use href="#t-exp"/></svg></button><button class="sb-tool" type="button"><svg><use href="#t-col"/></svg></button><button class="sb-tool" type="button"><svg><use href="#t-chk"/></svg></button></div>
    </div>
    <div class="actbar"><button class="btn actbtn actbtn-main" type="button">OK</button><button class="btn actbtn" type="button">Cancelar</button><button class="btn actbtn" type="button">Aplicar</button><button class="btn actbtn" type="button">Ajuda</button></div>
   </div>
   <svg class="grip"><use href="#gripic"/></svg>
  </div>
 </div>

 <svg class="leader"><path d="M103 16L594 156M107 113L515 460" stroke="#000" fill="none"/></svg>
</div>
</body>
</html>
